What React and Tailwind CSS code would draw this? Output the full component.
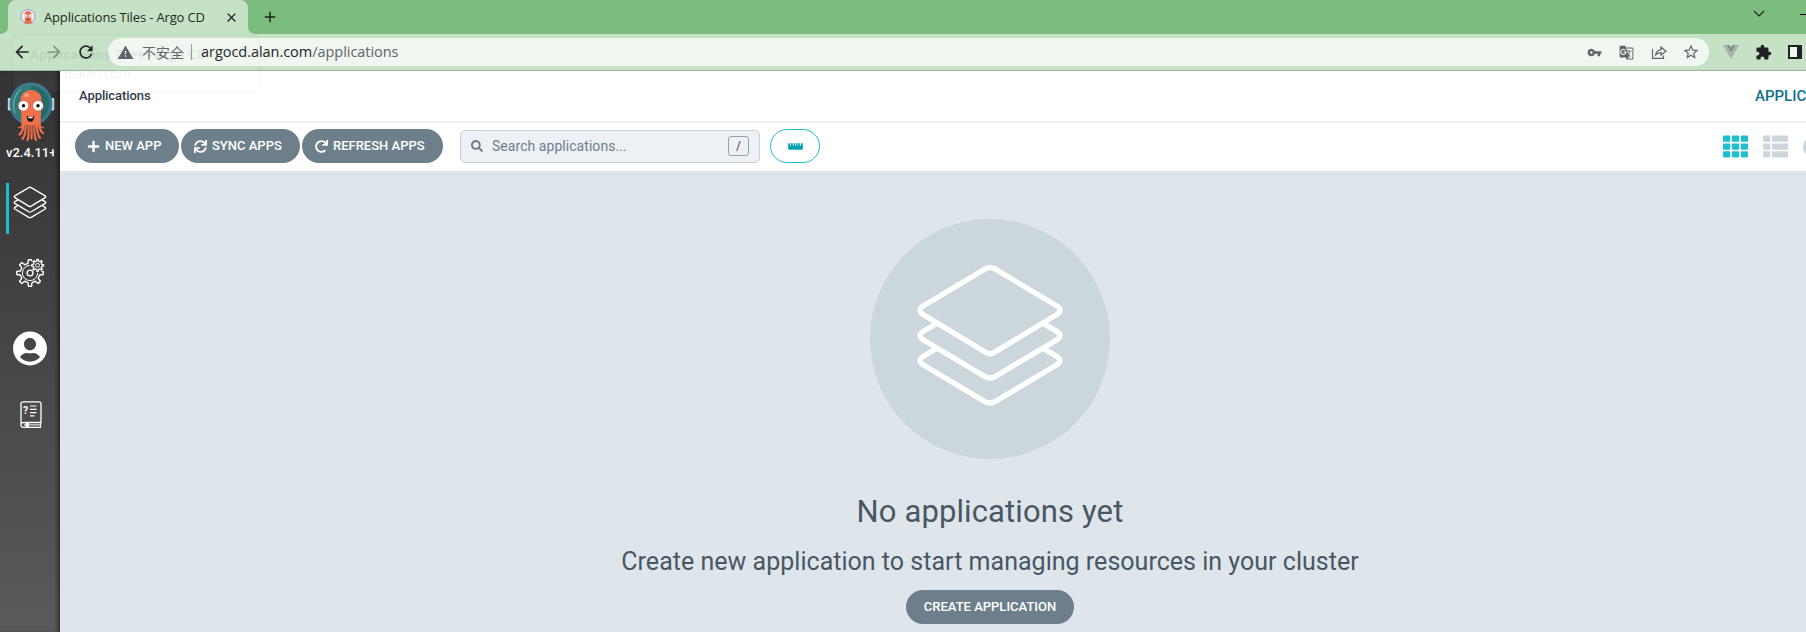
import React from "react";
import { FaPlus, FaSync, FaRedo, FaSearch, FaRulerHorizontal, FaTh, FaThList, FaUserCircle, FaChartPie } from "react-icons/fa";
import { MdVpnKey, MdGTranslate, MdStarBorder, MdExtension, MdArrowBack, MdArrowForward, MdRefresh, MdWarning, MdClose, MdAdd } from "react-icons/md";

function gearPath(cx, cy, outer, inner, teeth) {
  const step = (Math.PI * 2) / teeth;
  const points = [];
  for (let i = 0; i < teeth; i++) {
    const a = i * step;
    [[-0.27, inner], [-0.15, outer], [0.15, outer], [0.27, inner]].forEach(([k, r]) => {
      points.push(`${(cx + r * Math.cos(a + k * step)).toFixed(2)} ${(cy + r * Math.sin(a + k * step)).toFixed(2)}`);
    });
  }
  return `M${points.join("L")}Z`;
}

function Layers({ className, stroke }) {
  return (
    <svg className={className} viewBox="165 155 450 440" fill="none" stroke="#fff" strokeWidth={stroke} strokeLinejoin="round">
      <path d="M374 176Q390 167 406 176L592 287Q608 299 592 311L406 424Q390 435 374 424L188 311Q172 299 188 287Z" />
      <path d="M230 339L188 364Q172 375 188 387L374 498Q390 507 406 498L592 387Q608 375 592 364L550 339" />
      <path d="M230 414L188 439Q172 450 188 462L374 573Q390 582 406 573L592 462Q608 450 592 439L550 414" />
    </svg>
  );
}

function ArgoLogo({ className }) {
  return (
    <svg className={className} viewBox="6 80 50 62">
      <rect x="7.800" y="98" width="4" height="12.500" rx="1" fill="#b8d3e4" />
      <rect x="50.200" y="98" width="4" height="12.500" rx="1" fill="#b8d3e4" />
      <circle cx="31" cy="104" r="20.500" fill="#2b7b78" stroke="#3f7496" strokeWidth="1.800" />
      <path d="M31 86a18 18 0 0 1 0 36z" fill="#236a69" />
      <path d="M20.500 89.500Q10.500 99 15 113" fill="none" stroke="#79aaa8" strokeWidth="1.200" />
      <path d="M20.500 100C20.500 94 25 90 31 90S41.500 94 41.500 100L40.500 125H21.500Z" fill="#f0714b" />
      <g fill="none" stroke="#f0714b" strokeWidth="2.200" strokeLinecap="round">
        <path d="M22.500 123Q22.500 128 19 127.500M39.500 123Q39.500 128 43 127.500" strokeWidth="1.600" />
        <path d="M23 124Q23.500 132 19.500 134.500M25.500 124Q26 135 22.500 139M28.500 124Q29 136 27.500 140M31.500 124V138.500M34.500 124Q34 136 36 140M37 124Q37 135 40 138M39.500 124Q39.500 131 43 133" />
      </g>
      <path d="M25 127l-.5 7M28 125l.2 10M31.500 126v9M34.800 125l-.2 10M38 127l.5 6" stroke="#d2573a" strokeWidth=".7" fill="none" />
      <ellipse cx="26.500" cy="95" rx="2.600" ry="2" fill="#fba183" />
      <circle cx="23.400" cy="105.700" r="5.300" fill="#fff" stroke="#c9573a" strokeWidth=".7" />
      <circle cx="38" cy="105.700" r="5.300" fill="#fff" stroke="#c9573a" strokeWidth=".7" />
      <circle cx="23.500" cy="105.700" r="1.700" fill="#111" />
      <circle cx="38" cy="105.700" r="1.700" fill="#111" />
      <path d="M26.800 115.500Q31 118.500 34.200 115.500Q34.200 121.800 30.500 121.800T26.800 115.500Z" fill="#181818" />
      <path d="M28.300 116.500q2.300 1 4.400 0v1.700h-4.400z" fill="#fff" />
    </svg>
  );
}

function Favicon() {
  return (
    <svg className="ml-3 h-4 w-4" viewBox="0 0 16 16">
      <circle cx="8" cy="7.500" r="7" fill="#e8eef6" stroke="#9a8cc0" strokeWidth=".9" />
      <path d="M4.500 6Q4.500 2 8 2T11.500 6L11.200 11.500 12.500 14.500H4L5 11.500Z" fill="#ee6d48" />
      <circle cx="5.800" cy="7" r="1.700" fill="#fff" />
      <circle cx="10.200" cy="7" r="1.700" fill="#fff" />
      <circle cx="5.900" cy="7" r=".6" fill="#222" />
      <circle cx="10.100" cy="7" r=".6" fill="#222" />
      <path d="M6.800 10.500h2.400" stroke="#5b2a20" strokeWidth=".8" />
    </svg>
  );
}

function Gears() {
  return (
    <svg className="h-[30px] w-[30px]" viewBox="15 258 30 30" fill="none" stroke="#fff" strokeWidth="1.400" strokeLinejoin="round">
      <mask id="cut" maskUnits="userSpaceOnUse" x="10" y="250" width="40" height="45">
        <rect x="10" y="250" width="40" height="45" fill="#fff" stroke="none" />
        <circle cx="37.600" cy="265.300" r="7.500" fill="#000" stroke="none" />
      </mask>
      <g mask="url(#cut)">
        <path d={gearPath(30, 273, 13.3, 9.8, 8)} />
        <circle cx="30" cy="273" r="7.600" strokeWidth="1" />
      </g>
      <circle cx="30" cy="273" r="2.900" />
      <path d={gearPath(37.6, 265.3, 6, 4.3, 8)} strokeWidth="1.300" />
      <circle cx="37.600" cy="265.300" r="1.900" strokeWidth="1" />
    </svg>
  );
}

function Manual() {
  return (
    <svg className="h-7 w-[22px]" viewBox="0 0 22 28" fill="none" stroke="#fff" strokeWidth="1.300">
      <path d="M1 24.500V2.800Q1 .8 3 .8H19Q21 .8 21 2.800V21.500H3.500Q1 21.500 1 24T3.500 26.300H21" />
      <path d="M4 23.900H21M20.700 21V26.500" strokeWidth="1" />
      <path d="M10 5H16.500M10 8.300H16.500M10 11.600H16.500M10 14.900H14.500" strokeWidth="1.200" />
      <path d="M5.500 22V27.500L7.300 26.200 9 27.500V22Z" fill="#fff" stroke="none" />
      <text x="3" y="13" fill="#fff" stroke="none" fontFamily="Roboto, sans-serif" fontWeight="700" fontSize="10.500">?</text>
    </svg>
  );
}

function Pill({ icon: Icon, children, className }) {
  return (
    <button className={`flex h-[34px] items-center rounded-full bg-[#6d7f8b] text-[13px] font-medium text-white ${className}`}>
      {Icon && <Icon className="mr-[5px] h-[13px] w-[13px] shrink-0" />}
      {children}
    </button>
  );
}

function Browser() {
  return (
    <header className="shrink-0 font-['Open_Sans','Noto_Sans_CJK_SC',sans-serif]">
      <div className="flex h-[34px] bg-[#7bbd7d] pl-2">
        <div className="relative flex w-60 items-center rounded-t-lg bg-[#c5e2c6] text-[13px] text-[#1f2a20]">
          <Favicon />
          <span className="ml-2 w-[172px] pt-px whitespace-nowrap tracking-[-0.15px]">Applications Tiles - Argo CD</span>
          <MdClose className="ml-2 h-[15px] w-[15px] text-[#202124]" />
          <svg className="absolute bottom-0 -left-2 h-2 w-2" viewBox="0 0 8 8"><path d="M8 0V8H0Q8 8 8 0Z" fill="#c5e2c6" /></svg>
          <svg className="absolute -right-2 bottom-0 h-2 w-2" viewBox="0 0 8 8"><path d="M0 0V8H8Q0 8 0 0Z" fill="#c5e2c6" /></svg>
        </div>
        <MdAdd className="mt-[8px] ml-[13px] h-[18px] w-[18px] text-[#202124]" />
        <svg className="mt-[10px] ml-auto h-2 w-3" viewBox="0 0 12 8" fill="none" stroke="#222" strokeWidth="1.100"><path d="M1 1L6 6L11 1" /></svg>
        <div className="mt-[14px] ml-[35px] h-px w-[6px] bg-black" />
      </div>
      <div className="flex h-[37px] items-center border-b border-[#9fb4a0] bg-[#c5e2c6] text-[#5f6368]">
        <MdArrowBack className="ml-[12px] h-5 w-5 text-[#202124]" />
        <MdArrowForward className="ml-[12px] h-5 w-5 text-[#819584]" />
        <MdRefresh className="ml-[12px] h-5 w-5 text-[#202124]" />
        <div className="ml-[12px] flex h-7 w-[1601px] items-center rounded-full bg-[#f0f7f0] text-[14px]">
          <MdWarning className="ml-[9px] h-[17px] w-[17px]" />
          <span className="ml-[8px] w-[42px] whitespace-nowrap">不安全</span>
          <span className="ml-[7px] h-4 w-px bg-[#9aa09b]" />
          <span className="ml-[9px] text-[14.5px] whitespace-nowrap tracking-[-0.04px]"><span className="text-[#202124]">argocd.alan.com</span>/applications</span>
          <MdVpnKey className="ml-auto h-[15px] w-[15px]" />
          <MdGTranslate className="ml-[17px] h-[15px] w-[15px]" />
          <svg className="ml-[17px] h-[15px] w-4" viewBox="0 0 16 15" fill="none" stroke="#5f6368" strokeWidth="1.200">
            <path d="M1.500 4V13.400H12.500V10.500M4.500 10Q5.500 5 10 4.800V2L15 6.200 10 10V7.600Q7 7.500 4.500 10Z" />
          </svg>
          <MdStarBorder className="mr-[9px] ml-[15px] h-[18px] w-[18px]" />
        </div>
        <svg className="ml-[14px] h-[14px] w-4 shrink-0" viewBox="0 0 16 14">
          <path d="M0 0H3.500L8 7.500 12.500 0H16L8 14Z" fill="#a9b3aa" />
          <path d="M3.500 0H6.500L8 2.600 9.500 0H12.500L8 7.500Z" fill="#858d86" />
        </svg>
        <MdExtension className="ml-[16px] h-[17px] w-[17px] shrink-0 text-[#202124]" />
        <svg className="ml-[16px] h-[14px] w-[14px] shrink-0" viewBox="0 0 14 14"><path d="M1 1H13V13H1Z" fill="#f0f7f0" stroke="#202124" strokeWidth="2" /><path d="M9 1h4v12H9z" fill="#202124" /></svg>
      </div>
    </header>
  );
}

export default function App() {
  return (
    <div className="relative flex h-[632px] w-[1806px] flex-col overflow-hidden bg-white font-[Roboto,sans-serif]">
      <Browser />
      <div className="flex min-h-0 flex-1">
        <nav className="flex w-[60px] shrink-0 flex-col bg-linear-to-b from-[#333] to-[#5a5a5a] shadow-[inset_-4px_0_4px_-2px_rgba(0,0,0,0.55)]">
          <ArgoLogo className="mt-[9px] ml-[6px] h-[62px] w-[50px]" />
          <div className="mt-[1px] ml-[6px] h-5 w-12 overflow-hidden text-[13px] leading-5 font-medium whitespace-nowrap text-white">v2.4.11+3d9e9f2</div>
          <div className="mt-[20px] ml-[6px] flex h-[51px] border-l-[3px] border-[#1fbdd0]">
            <Layers className="mt-[3px] ml-[4px] h-[33px] w-[34px]" stroke="18" />
          </div>
          <div className="mt-[24px] ml-[15px]"><Gears /></div>
          <FaUserCircle className="mt-[43px] ml-[13px] h-[35px] w-[34px] text-white" />
          <div className="mt-[35px] ml-[20px]"><Manual /></div>
        </nav>
        <div className="min-w-0 flex-1 overflow-hidden">
          <div className="flex h-full w-[1860px] flex-col">
            <div className="flex h-[52px] items-center border-b-2 border-[#edf1f5] pr-4 pl-[19px]">
              <span className="text-[13px] font-medium tracking-[-0.08px] text-[#363c4a]">Applications</span>
              <span className="ml-auto w-[149px] text-[15px] font-medium whitespace-nowrap text-[#0f718a]">APPLICATIONS TILES</span>
            </div>
            <div className="flex h-12 shrink-0 items-center pb-[2px] pl-[15px]">
              <Pill icon={FaPlus} className="w-[104px] pl-[12px]">NEW APP</Pill>
              <Pill icon={FaSync} className="ml-[2px] w-[119px] pl-[13px]">SYNC APPS</Pill>
              <Pill icon={FaRedo} className="ml-[2px] w-[141px] pl-[13px]">REFRESH APPS</Pill>
              <div className="ml-[17px] flex h-[33px] w-[300px] items-center rounded-[5px] border border-[#c6d1d9] bg-[#edf1f5] text-[14px] text-[#6d7f8b]">
                <FaSearch className="ml-[10px] h-3 w-3" />
                <span className="ml-[9px] tracking-[0.05px]">Search applications...</span>
                <span className="mr-[10px] ml-auto flex h-5 w-[21px] items-center justify-center rounded-[3px] border border-[#8fa4b1] text-[12px] text-[#363c4a]">/</span>
              </div>
              <div className="ml-[10px] flex h-[34px] w-[50px] items-center justify-center rounded-full border border-[#1fbdd0] text-[#00a2b3]">
                <FaRulerHorizontal className="h-[13px] w-[15px]" />
              </div>
              <FaTh className="ml-[903px] h-[25px] w-[25px] text-[#1fbdd0]" />
              <FaThList className="ml-[15px] h-[25px] w-[25px] text-[#ccd6dd]" />
              <FaChartPie className="ml-[15px] h-[25px] w-[25px] text-[#ccd6dd]" />
            </div>
            <main className="flex flex-1 flex-col items-center bg-[#dee6ec] pt-12 text-[#495763]">
              <div className="flex h-60 w-60 shrink-0 flex-col items-center rounded-full bg-[#ccd6dd]">
                <Layers className="mt-[43px] h-[147px] w-[150px]" stroke="16" />
              </div>
              <h1 className="mt-[33px] text-[31px] leading-10 tracking-[0.12px] whitespace-nowrap">No applications yet</h1>
              <h2 className="mt-[14px] text-[25px] leading-8 tracking-[0.02px] whitespace-nowrap">Create new application to start managing resources in your cluster</h2>
              <Pill className="mt-[12px] w-[168px] shrink-0 justify-center">CREATE APPLICATION</Pill>
            </main>
          </div>
        </div>
      </div>
      <div className="pointer-events-none absolute top-[36px] left-[13px] h-[55px] w-[245px] rounded-md bg-white/3 px-[17px] pt-[9px] font-['Open_Sans',sans-serif] text-[13px] leading-[19px] text-black/8 shadow-[0_0_4px_rgba(0,0,0,0.06)]">
        <div className="font-bold whitespace-nowrap">Applications Tiles - Argo CD</div>
        <div>argocd.alan.com</div>
      </div>
    </div>
  );
}
